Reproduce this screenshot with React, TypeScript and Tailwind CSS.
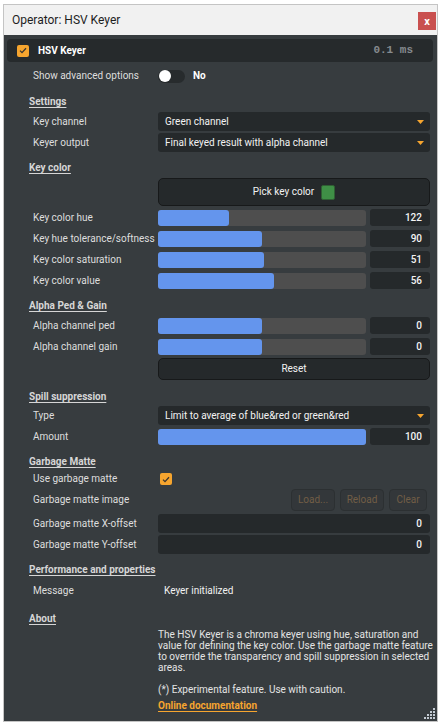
import React from 'react';

type RowProps = { label: string; className: string; children?: React.ReactNode };

const Caret = () => (
  <svg width="7" height="4" viewBox="0 0 7 4" className="shrink-0">
    <path d="M0 0h7L3.5 4z" fill="#f6a52f" />
  </svg>
);

const Check = ({ className }: { className: string }) => (
  <div className={`flex items-center justify-center rounded-[2px] bg-[#f6a52f] shrink-0 ${className}`}>
    <svg width="8" height="7" viewBox="0 0 8 7">
      <path d="M1 3.6l2 2L7 1.2" fill="none" stroke="#3a3530" strokeWidth="1.3" />
    </svg>
  </div>
);

const Heading = ({ text, className }: { text: string; className: string }) => (
  <div className={`flex h-[16px] items-center pl-[25px] ${className}`}>
    <span className="font-bold text-[#d6d6d6] underline decoration-1 underline-offset-2">{text}</span>
  </div>
);

const Row = ({ label, className, children }: RowProps) => (
  <div className={`flex items-center pl-[29px] pr-[7px] ${className}`}>
    <div className="w-[125px] shrink-0 text-[#dedede]">{label}</div>
    <div className="flex h-full min-w-0 flex-1 items-center">{children}</div>
  </div>
);

const Select = ({ value }: { value: string }) => (
  <div className="flex h-full flex-1 items-center justify-between rounded-[3px] bg-[#25292b] pl-[7px] pr-[6px] text-[#f2f2f2]">
    <span>{value}</span>
    <Caret />
  </div>
);

const Slider = ({ value, pct }: { value: number; pct: number }) => (
  <div className="flex h-full flex-1 items-center gap-[4px]">
    <div className="h-[16px] flex-1 rounded-[3px] bg-[#4e4e4e]">
      <div className="h-full rounded-[3px] bg-[#6495ed]" style={{ width: `${pct}%` }} />
    </div>
    <div className="flex h-full w-[60px] items-center justify-end rounded-[3px] bg-[#25292b] pr-[8px] font-medium text-[#f4f4f4]">
      {value}
    </div>
  </div>
);

const NumberBox = ({ value }: { value: number }) => (
  <div className="flex h-full flex-1 items-center justify-end rounded-[3px] bg-[#25292b] pr-[8px] font-medium text-[#f4f4f4]">
    {value}
  </div>
);

const DisabledBtn = ({ label, w }: { label: string; w: string }) => (
  <div className={`flex h-full items-center justify-center rounded-[4px] border border-[#2c3032] bg-[#33373a] text-[#725e46] ${w}`}>
    {label}
  </div>
);

const ResizeGrip = () => (
  <svg width="11" height="11" viewBox="0 0 11 11" className="absolute bottom-[2px] right-[2px]">
    {[
      [9, 0], [6, 3], [9, 3], [3, 6], [6, 6], [9, 6], [0, 9], [3, 9], [6, 9], [9, 9],
    ].map(([x, y]) => (
      <rect key={`${x}-${y}`} x={x} y={y} width="2" height="2" fill="#c3cad2" />
    ))}
  </svg>
);

export default function App() {
  return (
    <div className="min-h-screen bg-white pt-[4px] pl-[3px] font-['Roboto',sans-serif] text-[10px] leading-none">
      <div className="flex h-[718px] w-[435px] flex-col border border-[#c4c4c4] bg-[#373c3f]">
        {/* title bar */}
        <div className="flex h-[30px] shrink-0 items-start justify-between bg-[#f1f1f1] pl-[8px]">
          <span className="mt-[9px] text-[12px] text-[#1e1e1e]">Operator: HSV Keyer</span>
          <div className="mr-[1px] mt-[7px] flex h-[18px] w-[18px] items-center justify-center bg-[#c9504f] text-[11px] font-bold text-white">
            x
          </div>
        </div>

        <div className="relative flex-1">
          <div className="mx-[3px] mr-[4px] mt-[4px] flex h-[23px] items-center justify-between rounded-[4px] bg-[#262a2c] pl-[10px] pr-[20px]">
            <div className="flex items-center gap-[9px]">
              <Check className="h-[12px] w-[12px]" />
              <span className="font-bold text-white">HSV Keyer</span>
            </div>
            <span className="font-['Liberation_Mono',monospace] text-[11px] font-bold text-[#868b8f]">0.1 ms</span>
          </div>

          <Row label="Show advanced options" className="mt-[4px] h-[20px]">
            <div className="flex h-[13px] w-[27px] items-center rounded-full bg-[#272b2d] pl-[1px]">
              <div className="h-[12px] w-[12px] rounded-full bg-white" />
            </div>
            <span className="ml-[8px] font-bold text-white">No</span>
          </Row>

          <Heading text="Settings" className="mt-[8px]" />
          <Row label="Key channel" className="mt-[2px] h-[19px]">
            <Select value="Green channel" />
          </Row>
          <Row label="Keyer output" className="mt-[2px] h-[19px]">
            <Select value="Final keyed result with alpha channel" />
          </Row>

          <Heading text="Key color" className="mt-[8px]" />
          <Row label="" className="mt-[2px] h-[28px]">
            <div className="flex h-full flex-1 items-center justify-center gap-[7px] rounded-[5px] border border-[#17191a] bg-[#25292b] text-[#f2f2f2]">
              <span>Pick key color</span>
              <div className="h-[15px] w-[14px] rounded-[2px] border border-[#2f5f33] bg-[#3f8f46]" />
            </div>
          </Row>
          <Row label="Key color hue" className="mt-[3px] h-[17px]">
            <Slider value={122} pct={33.9} />
          </Row>
          <Row label="Key hue tolerance/softness" className="mt-[4px] h-[17px]">
            <Slider value={90} pct={50} />
          </Row>
          <Row label="Key color saturation" className="mt-[4px] h-[17px]">
            <Slider value={51} pct={51} />
          </Row>
          <Row label="Key color value" className="mt-[4px] h-[17px]">
            <Slider value={56} pct={56} />
          </Row>

          <Heading text="Alpha Ped & Gain" className="mt-[9px]" />
          <Row label="Alpha channel ped" className="mt-[3px] h-[17px]">
            <Slider value={0} pct={50} />
          </Row>
          <Row label="Alpha channel gain" className="mt-[4px] h-[17px]">
            <Slider value={0} pct={50} />
          </Row>
          <Row label="" className="mt-[3px] h-[22px]">
            <div className="flex h-full flex-1 items-center justify-center rounded-[5px] border border-[#17191a] bg-[#25292b] text-[#f2f2f2]">
              Reset
            </div>
          </Row>

          <Heading text="Spill suppression" className="mt-[9px]" />
          <Row label="Type" className="mt-[1px] h-[19px]">
            <Select value="Limit to average of blue&red or green&red" />
          </Row>
          <Row label="Amount" className="mt-[3px] h-[17px]">
            <Slider value={100} pct={100} />
          </Row>

          <Heading text="Garbage Matte" className="mt-[9px]" />
          <Row label="Use garbage matte" className="mt-[1px] h-[16px]">
            <Check className="ml-[2px] h-[12px] w-[12px]" />
          </Row>
          <Row label="Garbage matte image" className="mt-[2px] h-[22px]">
            <div className="flex h-full flex-1 justify-end gap-[5px] pr-[3px]">
              <DisabledBtn label="Load..." w="w-[44px]" />
              <DisabledBtn label="Reload" w="w-[44px]" />
              <DisabledBtn label="Clear" w="w-[38px]" />
            </div>
          </Row>
          <Row label="Garbage matte X-offset" className="mt-[3px] h-[19px]">
            <NumberBox value={0} />
          </Row>
          <Row label="Garbage matte Y-offset" className="mt-[2px] h-[19px]">
            <NumberBox value={0} />
          </Row>

          <Heading text="Performance and properties" className="mt-[8px]" />
          <Row label="Message" className="mt-[5px] h-[16px]">
            <span className="pl-[6px] text-[#f2f2f2]">Keyer initialized</span>
          </Row>

          <Heading text="About" className="mt-[12px]" />
          <div className="mt-[2px] pl-[154px] pr-[7px] leading-[11px] text-[#e4e4e4]">
            <div className="whitespace-nowrap">The HSV Keyer is a chroma keyer using hue, saturation and</div>
            <div className="whitespace-nowrap">value for defining the key color. Use the garbage matte feature</div>
            <div className="whitespace-nowrap">to override the transparency and spill suppression in selected</div>
            <div className="whitespace-nowrap">areas.</div>
            <div className="mt-[11px] whitespace-nowrap">(*) Experimental feature. Use with caution.</div>
            <div className="mt-[5px] font-bold text-[#f6a52f] underline decoration-1 underline-offset-2">Online documentation</div>
          </div>

          <ResizeGrip />
        </div>
      </div>
    </div>
  );
}
